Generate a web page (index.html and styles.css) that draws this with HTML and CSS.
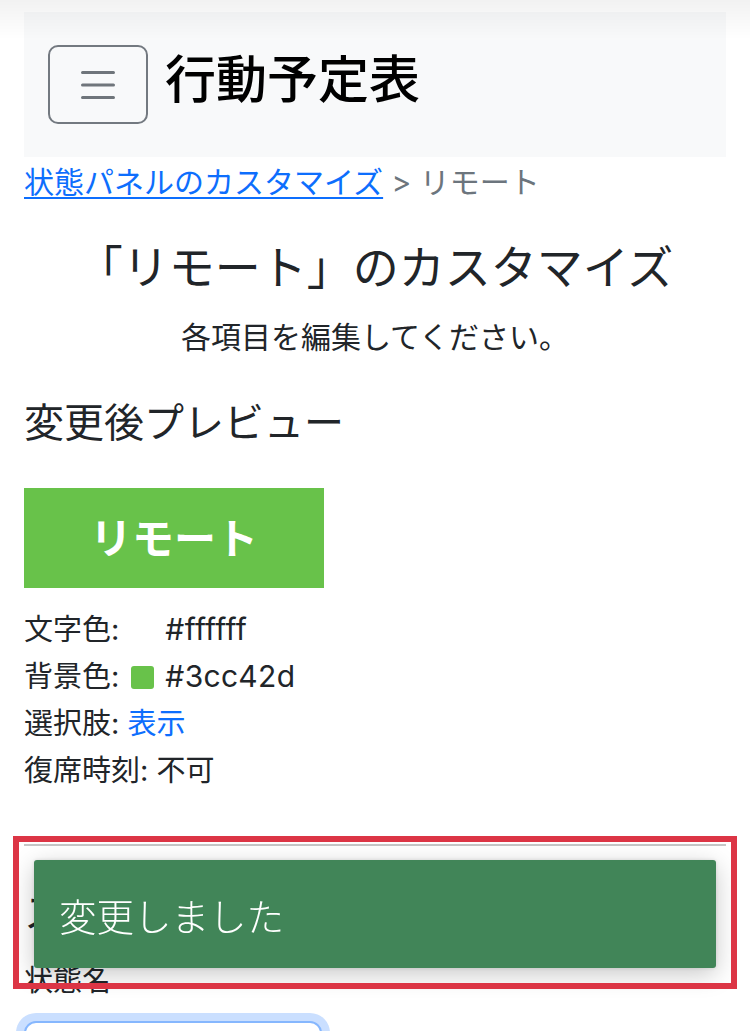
FILE: index.html
```html
<!DOCTYPE html>
<html lang="ja">
<head>
<meta charset="utf-8">
<title>行動予定表</title>
<link rel="stylesheet" href="styles.css">
</head>
<body>
<div class="top-fade"></div>
<header class="navbar">
  <button class="toggler" type="button" aria-label="menu">
    <svg class="toggler-icon" viewBox="0 0 34 30" width="34" height="30">
      <path d="M1.5 2.5H32.5M1.5 15H32.5M1.5 27.5H32.5" stroke="#6f757b" stroke-width="3" stroke-linecap="round" fill="none"/>
    </svg>
  </button>
  <span class="brand">行動予定表</span>
</header>
<main class="container">
  <nav class="crumbs"><a href="#" class="crumb-link">状態パネルのカスタマイズ</a> &gt; リモート</nav>
  <h3 class="page-title">「リモート」のカスタマイズ</h3>
  <p class="lead">各項目を編集してください。</p>
  <h4 class="section-title">変更後プレビュー</h4>
  <div class="preview">リモート</div>
  <ul class="info">
    <li>文字色:<span class="swatch swatch-white"></span><span class="val">#ffffff</span></li>
    <li>背景色:<span class="swatch swatch-green"></span><span class="val">#3cc42d</span></li>
    <li>選択肢: <a href="#" class="plain-link">表示</a></li>
    <li>復席時刻: 不可</li>
  </ul>
  <hr class="divider">
  <h4 class="section-title edit-title">スタイルの編集</h4>
  <label class="field-label" for="name">状態名</label>
  <input id="name" class="field-input" type="text" value="">
</main>
<div class="toast-frame"></div>
<div class="toast">変更しました</div>
</body>
</html>
```

FILE: styles.css
```css
html, body {
  margin: 0;
  padding: 0;
  background: #ffffff;
}
body {
  font-family: Inter, "Noto Sans CJK JP", "Noto Sans", sans-serif;
  color: #212529;
  font-size: 29px;
  line-height: 47px;
  overflow: hidden;
  height: 1031px;
}
.top-fade {
  position: fixed;
  left: 0;
  top: 0;
  width: 100%;
  height: 40px;
  background: linear-gradient(to bottom, rgba(0,0,0,0.05), rgba(0,0,0,0));
  pointer-events: none;
  z-index: 5;
}
.navbar {
  margin: 12px 24px 0;
  height: 145px;
  background: #f8f9fa;
  display: flex;
  align-items: center;
  padding-left: 24px;
}
.toggler {
  width: 100px;
  height: 79px;
  border: 2px solid #737980;
  border-radius: 10px;
  background: transparent;
  display: flex;
  align-items: center;
  justify-content: center;
  padding: 0;
  margin-right: 17px;
}
.toggler-icon {
  display: block;
}
.brand {
  font-family: "Noto Sans CJK JP", sans-serif;
  font-size: 51px;
  line-height: 60px;
  font-weight: 500;
  color: #000000;
  margin-bottom: 18px;
}
.container {
  padding: 0 24px;
}
.crumbs {
  margin-top: 3px;
  font-size: 30px;
  line-height: 44px;
  color: #6c757d;
}
.crumb-link {
  color: #0d6efd;
  text-decoration: underline;
  text-underline-offset: 4px;
  text-decoration-thickness: 2px;
}
.page-title {
  margin: 36px 0 0;
  text-align: center;
  font-size: 46px;
  line-height: 54px;
  font-weight: 400;
}
.lead {
  margin: 21px 0 0;
  text-align: center;
  font-size: 30px;
  line-height: 44px;
}
.section-title {
  margin: 40px 0 0;
  font-size: 40px;
  line-height: 48px;
  font-weight: 400;
}
.preview {
  margin-top: 41px;
  width: 300px;
  height: 100px;
  background: #68c24a;
  color: #ffffff;
  font-size: 42px;
  font-weight: 700;
  display: flex;
  align-items: center;
  justify-content: center;
}
.info {
  list-style: none;
  margin: 18px 0 0;
  padding: 0;
  font-size: 29px;
  line-height: 47px;
}
.swatch {
  display: inline-block;
  width: 23px;
  height: 23px;
  border-radius: 3px;
  vertical-align: -2px;
  margin: 0 11px 0 12px;
}
.swatch-white {
  background: #ffffff;
}
.swatch-green {
  background: #68c24a;
}
.val {
  font-size: 30px;
  letter-spacing: 0.3px;
}
.plain-link {
  color: #0d6efd;
  text-decoration: none;
}
.divider {
  margin: 50px 0 0;
  border: 0;
  border-top: 2px solid #c6c6c6;
  height: 0;
}
.edit-title {
  margin-top: 43px;
}
.field-label {
  display: block;
  margin-top: 22px;
  font-size: 29px;
  line-height: 44px;
}
.field-input {
  display: block;
  margin-top: 18px;
  width: 298px;
  height: 70px;
  box-sizing: border-box;
  border: 2px solid #86b7fe;
  border-radius: 12px;
  box-shadow: 0 0 0 8px rgba(13, 110, 253, 0.22);
  outline: none;
  font-size: 29px;
  font-family: inherit;
}
.toast-frame {
  position: fixed;
  left: 13px;
  top: 836px;
  width: 724px;
  height: 153px;
  box-sizing: border-box;
  border: 6px solid #dc3545;
  z-index: 10;
  pointer-events: none;
}
.toast {
  position: fixed;
  left: 34px;
  top: 860px;
  width: 682px;
  height: 108px;
  background: #418558;
  color: #ffffff;
  font-family: "Noto Sans CJK JP", sans-serif;
  font-size: 37.5px;
  font-weight: 300;
  display: flex;
  align-items: center;
  padding-left: 25px;
  box-sizing: border-box;
  border-radius: 3px;
  box-shadow: 0 6px 24px rgba(0, 0, 0, 0.22), 0 0 4px rgba(0,0,0,0.12);
  z-index: 9;
}
```
